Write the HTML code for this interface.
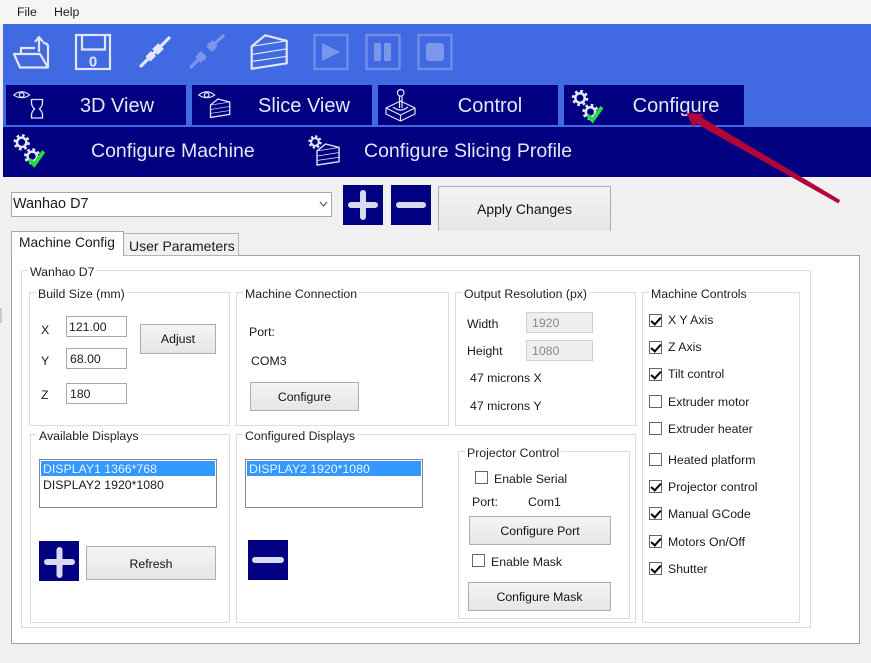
<!DOCTYPE html>
<html><head><meta charset="utf-8"><style>
html,body{margin:0;padding:0}
body{width:871px;height:663px;position:relative;overflow:hidden;background:#f0f0f0;font:12.3px/16px "Liberation Sans",sans-serif;color:#1a1a1a}
div,span{position:absolute;box-sizing:border-box}
.t{white-space:nowrap;height:16px}
.g{border:1px solid #dcdcdc;background:#fff}
.l{background:#fff;padding:0 2px;white-space:nowrap;height:16px;color:#222}
.b{border:1px solid #adadad;background:linear-gradient(#f4f4f4,#e6e6e6);text-align:center;color:#111}
.in{border:1px solid #a8a8a8;background:#fff;padding-left:6px;padding-top:2px;white-space:nowrap}
.dis{border:1px solid #d0d0d0;background:#eee;color:#888;padding-left:5px;padding-top:2px}
.tab{background:#000080;height:40px;width:180px;top:85px;color:#e4e7f6;font-size:20px;line-height:42px;text-align:center}
.nv{color:#e4e7f6;font-size:19.5px;line-height:24px;white-space:nowrap;top:139px;height:24px}
.c{width:13px;height:13px;border:1px solid #666;background:#fff}
.c.k::after{content:"";position:absolute;left:3px;top:0;width:4px;height:8px;border:solid #000;border-width:0 2px 2px 0;transform:rotate(42deg)}
.lb{border:1px solid #828790;background:#fff}
.sel{background:#3399ff;color:#e8f3ff;height:15px;left:1px;right:1px;top:1px;padding-left:2px;line-height:17px;white-space:nowrap}
.nb{background:#000080;width:40px;height:40px}
</style></head><body>
<div style="left:0;top:0;width:871px;height:24px;background:#f5f5f5"></div>
<div style="left:0;top:308px;width:2px;height:15px;background:#ccc"></div>
<span class="t" style="left:17px;top:4px">File</span>
<span class="t" style="left:54px;top:4px">Help</span>
<div style="left:3px;top:24px;width:868px;height:103px;background:#4169e1"></div>
<div style="left:3px;top:127px;width:868px;height:50px;background:#000080"></div>
<div class="tab" style="left:6px;padding-left:42px">3D View</div>
<div class="tab" style="left:192px;padding-left:44px">Slice View</div>
<div class="tab" style="left:378px;padding-left:44px">Control</div>
<div class="tab" style="left:564px;padding-left:44px">Configure</div>
<span class="nv" style="left:91px">Configure Machine</span>
<span class="nv" style="left:364px">Configure Slicing Profile</span>

<div style="left:11px;top:192px;width:321px;height:25px;border:1px solid #a8a8a8;background:#fff;padding:3px 0 0 1px;font-size:14.4px">Wanhao D7</div>
<div class="nb" style="left:343px;top:185px"></div>
<div class="nb" style="left:391px;top:185px"></div>
<div class="b" style="left:438px;top:186px;width:173px;height:45px;border-bottom:0;line-height:45px;font-size:14px">Apply Changes</div>

<div style="left:11px;top:255px;width:849px;height:389px;border:1px solid #a0a0a0;background:#fff"></div>
<div style="left:123px;top:233px;width:116px;height:23px;border:1px solid #b4b4b4;background:#f0f0f0;font-size:14px;padding:4px 0 0 5px;white-space:nowrap">User Parameters</div>
<div style="left:11px;top:231px;width:113px;height:25px;border:1px solid #a8a8a8;border-bottom:0;background:#fff;font-size:13.8px;padding:3px 0 0 7px;white-space:nowrap">Machine Config</div>

<div class="g" style="left:21px;top:270px;width:790px;height:358px"></div>
<span class="l" style="left:28px;top:264px">Wanhao D7</span>

<div class="g" style="left:29px;top:292px;width:201px;height:134px"></div>
<span class="l" style="left:36px;top:286px">Build Size (mm)</span>
<span class="t" style="left:41px;top:322px">X</span>
<span class="t" style="left:41px;top:353px">Y</span>
<span class="t" style="left:41px;top:387px">Z</span>
<div class="in" style="left:66px;top:316px;width:61px;height:21px;padding-left:2px">121.00</div>
<div class="in" style="left:66px;top:348px;width:61px;height:21px;padding-left:3px">68.00</div>
<div class="in" style="left:66px;top:383px;width:61px;height:21px;padding-left:3px">180</div>
<div class="b" style="left:140px;top:324px;width:76px;height:30px;line-height:28px">Adjust</div>

<div class="g" style="left:236px;top:292px;width:213px;height:134px"></div>
<span class="l" style="left:243px;top:286px">Machine Connection</span>
<span class="t" style="left:249px;top:324px">Port:</span>
<span class="t" style="left:251px;top:353px">COM3</span>
<div class="b" style="left:250px;top:382px;width:109px;height:29px;line-height:29px">Configure</div>

<div class="g" style="left:455px;top:292px;width:181px;height:134px"></div>
<span class="l" style="left:462px;top:286px">Output Resolution (px)</span>
<span class="t" style="left:467px;top:316px">Width</span>
<span class="t" style="left:467px;top:343px">Height</span>
<div class="dis" style="left:526px;top:312px;width:67px;height:21px">1920</div>
<div class="dis" style="left:526px;top:340px;width:67px;height:21px">1080</div>
<span class="t" style="left:470px;top:370px">47 microns X</span>
<span class="t" style="left:470px;top:398px">47 microns Y</span>

<div class="g" style="left:642px;top:292px;width:158px;height:331px"></div>
<span class="l" style="left:649px;top:286px">Machine Controls</span>
<div class="c k" style="left:649px;top:314px"></div><span class="t" style="left:668px;top:312px">X Y Axis</span>
<div class="c k" style="left:649px;top:341px"></div><span class="t" style="left:668px;top:339px">Z Axis</span>
<div class="c k" style="left:649px;top:368px"></div><span class="t" style="left:668px;top:366px">Tilt control</span>
<div class="c" style="left:649px;top:395px"></div><span class="t" style="left:668px;top:394px">Extruder motor</span>
<div class="c" style="left:649px;top:422px"></div><span class="t" style="left:668px;top:421px">Extruder heater</span>
<div class="c" style="left:649px;top:453px"></div><span class="t" style="left:668px;top:452px">Heated platform</span>
<div class="c k" style="left:649px;top:480px"></div><span class="t" style="left:668px;top:479px">Projector control</span>
<div class="c k" style="left:649px;top:507px"></div><span class="t" style="left:668px;top:506px">Manual GCode</span>
<div class="c k" style="left:649px;top:535px"></div><span class="t" style="left:668px;top:534px">Motors On/Off</span>
<div class="c k" style="left:649px;top:562px"></div><span class="t" style="left:668px;top:561px">Shutter</span>

<div class="g" style="left:30px;top:434px;width:200px;height:189px"></div>
<span class="l" style="left:37px;top:428px">Available Displays</span>
<div class="lb" style="left:39px;top:459px;width:178px;height:49px">
<div class="sel">DISPLAY1 1366*768</div>
<span class="t" style="left:3px;top:17px">DISPLAY2 1920*1080</span></div>
<div class="nb" style="left:39px;top:541px"></div>
<div class="b" style="left:86px;top:546px;width:130px;height:34px;line-height:34px">Refresh</div>

<div class="g" style="left:236px;top:434px;width:400px;height:189px"></div>
<span class="l" style="left:243px;top:428px">Configured Displays</span>
<div class="lb" style="left:245px;top:459px;width:178px;height:49px">
<div class="sel">DISPLAY2 1920*1080</div></div>
<div class="nb" style="left:248px;top:540px"></div>

<div class="g" style="left:458px;top:451px;width:172px;height:168px"></div>
<span class="l" style="left:465px;top:445px">Projector Control</span>
<div class="c" style="left:475px;top:471px"></div><span class="t" style="left:494px;top:471px">Enable Serial</span>
<span class="t" style="left:472px;top:494px">Port:</span>
<span class="t" style="left:528px;top:494px">Com1</span>
<div class="b" style="left:469px;top:516px;width:142px;height:29px;line-height:29px">Configure Port</div>
<div class="c" style="left:472px;top:554px"></div><span class="t" style="left:491px;top:554px">Enable Mask</span>
<div class="b" style="left:468px;top:582px;width:143px;height:29px;line-height:29px">Configure Mask</div>

<svg width="871" height="663" viewBox="0 0 871 663" style="position:absolute;left:0;top:0">
<defs>
<g id="cake" fill="none" stroke-linejoin="round">
<path d="M0 11 L13.500 0 L35 5.500 V28 L0 33.500 Z"/>
<path d="M0 11 L35 5.500 M1 19 L35 13.500 M1 26 L35 21" stroke-width="1.200"/>
</g>
<g id="eye" fill="none" stroke="#dfe2f4">
<path d="M-8 0 Q0 -6.500 8 0 Q0 5.500 -8 0Z" stroke-width="1.100"/>
<circle r="2.300" stroke-width="1.300"/>
</g>
<g id="gear" fill="none" stroke="#e4e7f6">
<circle r="4.700" stroke-width="2.500"/>
<circle r="6.800" stroke-width="2.800" stroke-dasharray="2.670 2.670"/>
</g>
<g id="gears">
<use href="#gear" x="0" y="0"/>
<use href="#gear" x="10.500" y="14"/>
<path d="M7.500 17 L12.500 22.500 L22 9" fill="none" stroke="#22dd44" stroke-width="3.800"/>
</g>
</defs>

<!-- folder -->
<g fill="none" stroke="#e2e6f8" stroke-width="2.200" stroke-linejoin="round">
<path d="M20 67.500 L14 54 H40 L48 67.500 Z"/>
<path d="M21 53 V48 H35 M48 67 V47 Q48 43 43 43"/>
<path d="M39 52 V37 M35 42 L39 37 L43 42"/>
</g>
<!-- floppy -->
<g fill="none" stroke="#e2e6f8" stroke-width="2.200">
<rect x="76" y="35" width="34" height="34"/>
<path d="M82 35 V49.500 H105 V35"/>
</g>
<text x="93" y="66.500" text-anchor="middle" font-family="Liberation Sans" font-weight="bold" font-size="15" fill="#e2e6f8">0</text>
<!-- plug bright -->
<g stroke="#e2e6f8" fill="none">
<path d="M141 66 L169 38" stroke-width="3.200" stroke-linecap="round"/>
<path d="M148 59 L153.500 53.500" stroke-width="7"/>
<path d="M155 52 L161 46" stroke-width="8"/>
</g>
<!-- plug dim -->
<g stroke="#7f96e8" fill="none">
<path d="M191 67 L201 57 M212 46 L223 36" stroke-width="3.200" stroke-linecap="round"/>
<path d="M198 60 L204 54" stroke-width="8"/>
<path d="M209 49 L215 43" stroke-width="8"/>
<path d="M198 53 L205 60 M208 43 L215 50" stroke-width="1.500"/>
</g>
<!-- cake -->
<use href="#cake" x="251.700" y="35.300" stroke="#e2e6f8" stroke-width="2.200"/>
<!-- play pause stop -->
<g fill="none" stroke="#6f8ce8" stroke-width="2.400">
<rect x="314.500" y="35" width="33" height="34"/>
<rect x="366.500" y="35" width="33" height="34"/>
<rect x="418.500" y="35" width="33" height="34"/>
</g>
<g fill="#7c96ea">
<path d="M322 43 L340 52 L322 61 Z"/>
<rect x="374" y="43" width="7" height="18" rx="1"/><rect x="384" y="43" width="7" height="18" rx="1"/>
<rect x="426" y="43" width="18" height="18" rx="3"/>
</g>
<!-- tab icons -->
<use href="#eye" x="21.700" y="95"/>
<path d="M31.500 99.500 H42.500 V103 Q42.500 106 39.500 109 Q42.500 112 42.500 115 V118 H31.500 V115 Q31.500 112 34.500 109 Q31.500 106 31.500 103 Z" fill="none" stroke="#e4e7f6" stroke-width="1.300"/>
<use href="#eye" x="206.700" y="95"/>
<g transform="translate(210.500,99) scale(.55)"><use href="#cake" stroke="#e4e7f6" stroke-width="2.400"/></g>
<!-- joystick -->
<g fill="none" stroke="#e4e7f6" stroke-width="1.200" stroke-linejoin="round">
<circle cx="400.700" cy="92.800" r="3.300"/>
<path d="M399.500 96 V108 M402 96 V108"/>
<path d="M386 108 L400.500 101 L415 108 L400.500 115 Z M386 108 V114 L400.500 121 L415 114 V108 M400.500 115 V121"/>
<path d="M393 107 Q400.500 113 408 107"/>
</g>
<use href="#gears" x="21.700" y="142.300"/>
<use href="#gears" x="580" y="98"/>
<g transform="translate(315,142) scale(.82)"><use href="#gear"/></g>
<g transform="translate(317,144) scale(.63)"><use href="#cake" stroke="#e4e7f6" stroke-width="2.200"/></g>
<!-- + - buttons -->
<g stroke="#d8daf0" stroke-width="6" stroke-linecap="round">
<path d="M351 205 H375 M363 193 V217"/>
<path d="M399 205 H423"/>
<path d="M47 562 H72 M59.500 550 V575"/>
<path d="M255 560 H281"/>
</g>
<!-- combo arrow -->
<path d="M320 202 L323.500 206 L327 202" fill="none" stroke="#666" stroke-width="1.300"/>
<!-- red arrow -->
<path d="M686.500 113 L704 114 L701 117 L840 200 L838.500 203.500 L696 123.500 L693 127 Z" fill="#b0063a"/>
</svg>
</body></html>
